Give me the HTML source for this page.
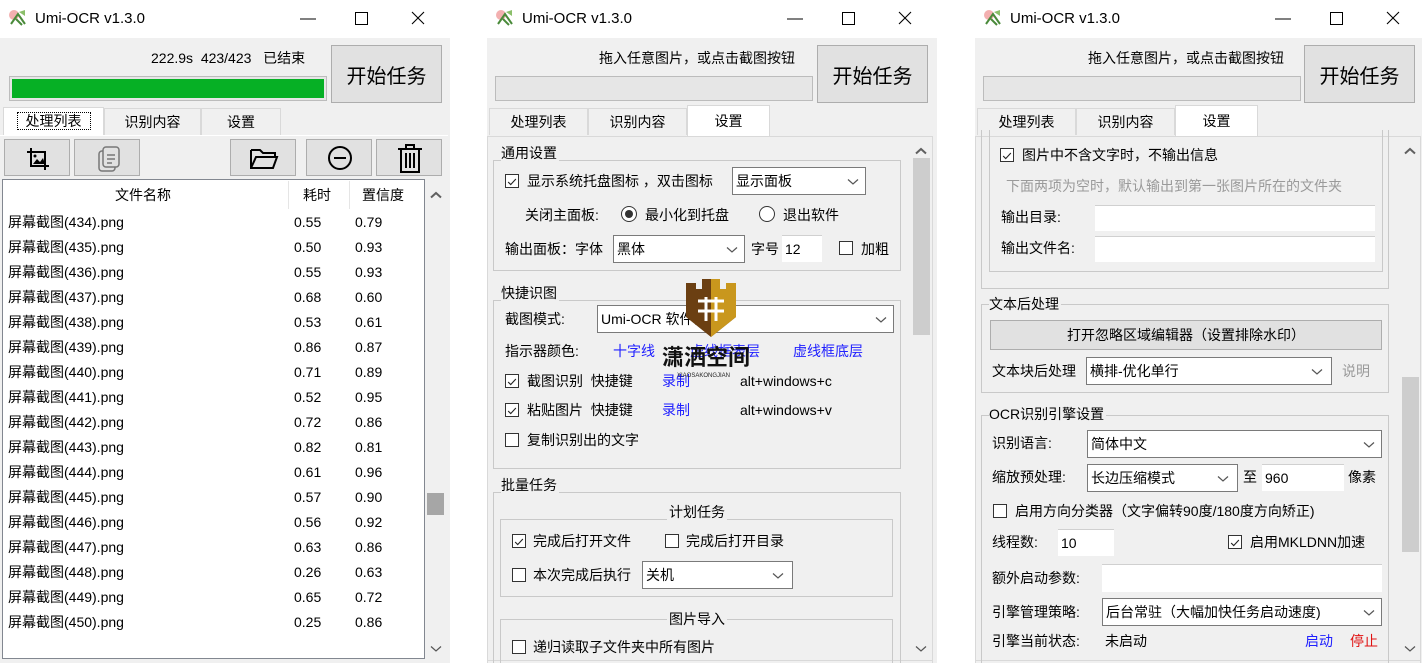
<!DOCTYPE html>
<html><head><meta charset="utf-8"><style>
*{margin:0;padding:0;box-sizing:border-box}
body{width:1422px;height:663px;overflow:hidden;background:#fff;font-family:"Liberation Sans","Noto Sans CJK SC",sans-serif;color:#000;position:relative}
.a{position:absolute}
.t{position:absolute;white-space:nowrap;font-size:14px;line-height:16px}
.win{position:absolute;top:0;height:663px;background:#f0f0f0;overflow:hidden}
.tb{position:absolute;left:0;top:0;right:0;height:38px;background:#fff}
.btn{position:absolute;background:#e1e1e1;border:1px solid #adadad}
.big{font-size:20px;display:flex;align-items:center;justify-content:center}
.pb{position:absolute;background:#e6e6e6;border:1px solid #bcbcbc}
.tab{position:absolute;top:108px;height:27px;border:1px solid #d9d9d9;border-bottom:none;background:#f0f0f0;font-size:14px;text-align:center;line-height:27px}
.sel{background:#fff;top:105px;height:31px;line-height:31px}
.g{position:absolute;border:1px solid #c9c9c9}
.gt{position:absolute;background:#f0f0f0;font-size:14px;line-height:16px;padding-right:2px;white-space:nowrap}
.in{position:absolute;background:#fff;border:1px solid #7a7a7a;font-size:14px;line-height:16px;padding:5px 3px;white-space:nowrap}
.in2{position:absolute;background:#fff;border-top:1px solid #d0d0d0;font-size:14px;padding:5px 3px;line-height:16px}
.cb{position:absolute;width:14px;height:14px;border:1px solid #333;background:#fff}
.rd{position:absolute;width:16px;height:16px;border:1px solid #333;border-radius:50%;background:#fff}
.sb{position:absolute;background:#f0f0f0}
.th{position:absolute;background:#cdcdcd}
</style></head><body>
<svg width="0" height="0" style="position:absolute"><defs>
<symbol id="chk" viewBox="0 0 14 14"><path d="M2.5 7 L5.5 10 L11.5 3.5" fill="none" stroke="#222" stroke-width="1.3"/></symbol>
<symbol id="dn" viewBox="0 0 12 8"><path d="M1 1.5 L6 6 L11 1.5" fill="none" stroke="#555" stroke-width="1.2"/></symbol>
<symbol id="up" viewBox="0 0 12 8"><path d="M1 6.5 L6 2 L11 6.5" fill="none" stroke="#606060" stroke-width="2"/></symbol>
<symbol id="ico" viewBox="0 0 20 18"><circle cx="6" cy="6" r="5" fill="#f3b0b0"/><path d="M3 15 L10 5 L17 15 M8 10 l6 6" stroke="#4a8a3a" stroke-width="2" fill="none"/><path d="M11 3 l6 -2 l0 6 z" fill="#8bbf6a"/></symbol>
<symbol id="ctl" viewBox="0 0 140 20"><path d="M0 10 H16" stroke="#000" stroke-width="1"/><rect x="55.5" y="3.5" width="12" height="12" fill="none" stroke="#000"/><path d="M112 3 L124 15 M124 3 L112 15" stroke="#000" stroke-width="1.1"/></symbol>
</defs></svg>

<!-- ============ LEFT WINDOW ============ -->
<div class="win" style="left:0;width:450px">
 <div class="tb"><svg class="a" style="left:8px;top:9px" width="20" height="18"><use href="#ico"/></svg>
  <div class="t" style="left:35px;top:10px;font-size:15px;line-height:18px">Umi-OCR v1.3.0</div>
  <svg class="a" style="left:300px;top:9px" width="140" height="20"><use href="#ctl"/></svg></div>
 <div class="t" style="left:151px;top:50px">222.9s&nbsp; 423/423&nbsp;&nbsp; 已结束</div>
 <div class="pb" style="left:9px;top:76px;width:318px;height:25px"><div class="a" style="left:2px;top:2px;right:2px;bottom:2px;background:#06b025"></div></div>
 <div class="btn big" style="left:331px;top:45px;width:111px;height:58px">开始任务</div>
 <div class="tab sel" style="left:3px;width:101px;top:107px;height:28px;line-height:26px"><span style="border:1px dotted #000;padding:0 8px">处理列表</span></div>
 <div class="tab" style="left:104px;width:97px">识别内容</div>
 <div class="tab" style="left:201px;width:80px">设置</div>
 <div class="a" style="left:0;top:135px;width:448px;height:1px;background:#fff"></div>
 <div class="btn" style="left:4px;top:139px;width:66px;height:37px"><svg class="a" style="left:20px;top:6px" width="26" height="26" viewBox="0 0 26 26"><path d="M6 2v18h18 M2 6h18v18" fill="none" stroke="#000" stroke-width="2"/><path d="M8 18l4-5 3 3 3-4 2 6z" fill="#000"/><circle cx="10" cy="10" r="1.5"/></svg></div>
 <div class="btn" style="left:74px;top:139px;width:66px;height:37px"><svg class="a" style="left:22px;top:5px" width="24" height="28" viewBox="0 0 24 28"><rect x="2" y="6" width="16" height="20" rx="3" fill="none" stroke="#777" stroke-width="1.5"/><rect x="6" y="2" width="16" height="20" rx="3" fill="#e1e1e1" stroke="#777" stroke-width="1.5"/><path d="M10 10h8M10 14h8M10 18h5" stroke="#777" stroke-width="1.5"/></svg></div>
 <div class="btn" style="left:230px;top:139px;width:66px;height:37px"><svg class="a" style="left:18px;top:8px" width="30" height="22" viewBox="0 0 30 22"><path d="M2 2h9l3 3h12v4 M2 2v18h22l4-11H7l-5 11" fill="none" stroke="#000" stroke-width="2"/></svg></div>
 <div class="btn" style="left:306px;top:139px;width:66px;height:37px"><svg class="a" style="left:20px;top:5px" width="26" height="26" viewBox="0 0 26 26"><circle cx="13" cy="13" r="11" fill="none" stroke="#000" stroke-width="2"/><path d="M7 13h12" stroke="#000" stroke-width="2"/></svg></div>
 <div class="btn" style="left:376px;top:139px;width:66px;height:37px"><svg class="a" style="left:20px;top:3px" width="26" height="31" viewBox="0 0 26 31"><path d="M1 6h24 M9 6V2h8v4 M4 6v23h18V6 M9 10v15M13 10v15M17 10v15" fill="none" stroke="#000" stroke-width="2"/></svg></div>
 <div class="a" style="left:2px;top:179px;width:423px;height:480px;background:#fff;border:1px solid #828790"></div>
 <div class="a" style="left:288px;top:181px;width:1px;height:28px;background:#e5e5e5"></div>
 <div class="a" style="left:349px;top:181px;width:1px;height:28px;background:#e5e5e5"></div>
 <div class="t" style="left:115px;top:187px">文件名称</div>
 <div class="t" style="left:303px;top:187px">耗时</div>
 <div class="t" style="left:362px;top:187px">置信度</div>
 <div class="sb" style="left:426px;top:179px;width:19px;height:480px"></div>
 <svg class="a" style="left:430px;top:191px" width="12" height="8"><use href="#up"/></svg>
 <svg class="a" style="left:430px;top:645px" width="12" height="8"><use href="#dn"/></svg>
 <div class="th" style="left:427px;top:493px;width:17px;height:22px;background:#a6a6a6"></div>
 <div id="rows"></div>
</div>

<!-- ============ MIDDLE WINDOW ============ -->
<div class="win" style="left:487px;width:450px">
 <div class="tb"><svg class="a" style="left:8px;top:9px" width="20" height="18"><use href="#ico"/></svg>
  <div class="t" style="left:35px;top:10px;font-size:15px;line-height:18px">Umi-OCR v1.3.0</div>
  <svg class="a" style="left:300px;top:9px" width="140" height="20"><use href="#ctl"/></svg></div>
 <div class="t" style="left:112px;top:50px">拖入任意图片，或点击截图按钮</div>
 <div class="pb" style="left:8px;top:76px;width:318px;height:25px"></div>
 <div class="btn big" style="left:330px;top:45px;width:111px;height:58px">开始任务</div>
 <div class="tab" style="left:2px;width:99px">处理列表</div>
 <div class="tab" style="left:101px;width:99px">识别内容</div>
 <div class="tab sel" style="left:200px;width:83px">设置</div>
 <div class="a" style="left:0;top:136px;width:446px;height:527px;border:1px solid #d9d9d9;border-bottom:none"></div>
 <div class="sb" style="left:424px;top:137px;width:19px;height:523px"></div>
 <svg class="a" style="left:428px;top:147px" width="12" height="8"><use href="#up"/></svg>
 <svg class="a" style="left:428px;top:645px" width="12" height="8"><use href="#dn"/></svg>
 <div class="th" style="left:426px;top:158px;width:17px;height:177px"></div>
 <div class="a" style="left:0;top:660px;width:446px;height:1px;background:#d9d9d9"></div>

 <div class="g" style="left:6px;top:160px;width:408px;height:111px"></div>
 <div class="gt" style="left:14px;top:145px">通用设置</div>
 <div class="cb" style="left:18px;top:174px"><svg width="12" height="12"><use href="#chk"/></svg></div>
 <div class="t" style="left:40px;top:173px">显示系统托盘图标 ，双击图标</div>
 <div class="in" style="left:245px;top:167px;width:134px;height:28px">显示面板<svg class="a" style="right:6px;top:10px" width="12" height="8"><use href="#dn"/></svg></div>
 <div class="t" style="left:38px;top:207px">关闭主面板:</div>
 <div class="rd" style="left:134px;top:206px"><div class="a" style="left:3px;top:3px;width:8px;height:8px;border-radius:50%;background:#333"></div></div>
 <div class="t" style="left:158px;top:207px">最小化到托盘</div>
 <div class="rd" style="left:272px;top:206px"></div>
 <div class="t" style="left:296px;top:207px">退出软件</div>
 <div class="t" style="left:18px;top:241px">输出面板：字体</div>
 <div class="in" style="left:126px;top:235px;width:132px;height:28px">黑体<svg class="a" style="right:6px;top:10px" width="12" height="8"><use href="#dn"/></svg></div>
 <div class="t" style="left:264px;top:241px">字号</div>
 <div class="in2" style="left:295px;top:235px;width:40px;height:27px">12</div>
 <div class="cb" style="left:352px;top:241px"></div>
 <div class="t" style="left:374px;top:241px">加粗</div>

 <div class="g" style="left:6px;top:300px;width:408px;height:169px"></div>
 <div class="gt" style="left:14px;top:285px">快捷识图</div>
 <div class="t" style="left:18px;top:311px">截图模式:</div>
 <div class="in" style="left:110px;top:305px;width:297px;height:28px">Umi-OCR 软件截图<svg class="a" style="right:6px;top:10px" width="12" height="8"><use href="#dn"/></svg></div>
 <div class="t" style="left:18px;top:343px">指示器颜色:</div>
 <div class="t" style="left:126px;top:343px;color:#2020ff">十字线</div>
 <div class="t" style="left:203px;top:343px;color:#2020ff">虚线框表层</div>
 <div class="t" style="left:306px;top:343px;color:#2020ff">虚线框底层</div>
 <div class="cb" style="left:18px;top:374px"><svg width="12" height="12"><use href="#chk"/></svg></div>
 <div class="t" style="left:40px;top:373px">截图识别&nbsp; 快捷键</div>
 <div class="t" style="left:175px;top:373px;color:#2020ff">录制</div>
 <div class="t" style="left:253px;top:373px">alt+windows+c</div>
 <div class="cb" style="left:18px;top:403px"><svg width="12" height="12"><use href="#chk"/></svg></div>
 <div class="t" style="left:40px;top:402px">粘贴图片&nbsp; 快捷键</div>
 <div class="t" style="left:175px;top:402px;color:#2020ff">录制</div>
 <div class="t" style="left:253px;top:402px">alt+windows+v</div>
 <div class="cb" style="left:18px;top:433px"></div>
 <div class="t" style="left:40px;top:432px">复制识别出的文字</div>

 <!-- watermark -->
 <svg class="a" style="left:199px;top:279px" width="50" height="58" viewBox="0 0 50 58"><path d="M0 4h10v6h6V0h18v10h6V4h10v34L25 58 0 38z" fill="#6b3f12"/><path d="M25 0h9v10h6V4h10v34L25 58z" fill="#c9971d"/><path d="M12 22h26M12 32h26M20 18v24M30 18v24" stroke="#fff" stroke-width="3"/></svg>
 <div class="t" style="left:175px;top:345px;font-size:22px;line-height:26px;font-weight:bold;color:#111">潇洒空间</div>
 <div class="t" style="left:190px;top:372px;font-size:6px;line-height:8px;color:#222">XIAOSAKONGJIAN</div>

 <div class="g" style="left:6px;top:492px;width:408px;height:180px"></div>
 <div class="gt" style="left:14px;top:477px">批量任务</div>
 <div class="g" style="left:13px;top:519px;width:393px;height:78px"></div>
 <div class="gt" style="left:180px;top:504px;padding:0 2px">计划任务</div>
 <div class="cb" style="left:25px;top:534px"><svg width="12" height="12"><use href="#chk"/></svg></div>
 <div class="t" style="left:46px;top:533px">完成后打开文件</div>
 <div class="cb" style="left:178px;top:534px"></div>
 <div class="t" style="left:199px;top:533px">完成后打开目录</div>
 <div class="cb" style="left:25px;top:568px"></div>
 <div class="t" style="left:46px;top:567px">本次完成后执行</div>
 <div class="in" style="left:155px;top:561px;width:151px;height:28px">关机<svg class="a" style="right:8px;top:10px" width="12" height="8"><use href="#dn"/></svg></div>
 <div class="g" style="left:13px;top:619px;width:393px;height:60px"></div>
 <div class="gt" style="left:180px;top:611px;padding:0 2px">图片导入</div>
 <div class="cb" style="left:25px;top:640px"></div>
 <div class="t" style="left:46px;top:639px">递归读取子文件夹中所有图片</div>
</div>

<!-- ============ RIGHT WINDOW ============ -->
<div class="win" style="left:975px;width:447px">
 <div class="tb"><svg class="a" style="left:8px;top:9px" width="20" height="18"><use href="#ico"/></svg>
  <div class="t" style="left:35px;top:10px;font-size:15px;line-height:18px">Umi-OCR v1.3.0</div>
  <svg class="a" style="left:300px;top:9px" width="140" height="20"><use href="#ctl"/></svg></div>
 <div class="t" style="left:113px;top:50px">拖入任意图片，或点击截图按钮</div>
 <div class="pb" style="left:8px;top:76px;width:318px;height:25px"></div>
 <div class="btn big" style="left:329px;top:45px;width:111px;height:58px">开始任务</div>
 <div class="tab" style="left:2px;width:99px">处理列表</div>
 <div class="tab" style="left:101px;width:99px">识别内容</div>
 <div class="tab sel" style="left:200px;width:83px">设置</div>
 <div class="a" style="left:0;top:136px;width:446px;height:527px;border:1px solid #d9d9d9;border-bottom:none"></div>
 <div class="sb" style="left:425px;top:137px;width:19px;height:523px"></div>
 <svg class="a" style="left:429px;top:147px" width="12" height="8"><use href="#up"/></svg>
 <svg class="a" style="left:429px;top:645px" width="12" height="8"><use href="#dn"/></svg>
 <div class="th" style="left:427px;top:377px;width:17px;height:175px"></div>
 <div class="a" style="left:0;top:660px;width:446px;height:1px;background:#d9d9d9"></div>

 <div class="a" style="left:6px;top:130px;width:408px;height:159px;border:1px solid #c9c9c9;border-top:none"></div>
 <div class="a" style="left:14px;top:130px;width:394px;height:142px;border:1px solid #c9c9c9;border-top:none"></div>
 <div class="cb" style="left:25px;top:148px"><svg width="12" height="12"><use href="#chk"/></svg></div>
 <div class="t" style="left:47px;top:147px">图片中不含文字时，不输出信息</div>
 <div class="t" style="left:31px;top:178px;color:#9a9a9a">下面两项为空时，默认输出到第一张图片所在的文件夹</div>
 <div class="t" style="left:26px;top:209px">输出目录:</div>
 <div class="in2" style="left:120px;top:205px;width:280px;height:26px"></div>
 <div class="t" style="left:26px;top:240px">输出文件名:</div>
 <div class="in2" style="left:120px;top:236px;width:280px;height:26px"></div>

 <div class="g" style="left:6px;top:304px;width:408px;height:89px"></div>
 <div class="gt" style="left:14px;top:296px">文本后处理</div>
 <div class="btn" style="left:15px;top:320px;width:392px;height:30px;font-size:14px;text-align:center;line-height:28px">打开忽略区域编辑器（设置排除水印）</div>
 <div class="t" style="left:17px;top:363px">文本块后处理</div>
 <div class="in" style="left:111px;top:357px;width:246px;height:28px">横排-优化单行<svg class="a" style="right:8px;top:10px" width="12" height="8"><use href="#dn"/></svg></div>
 <div class="t" style="left:367px;top:363px;color:#9a9a9a">说明</div>

 <div class="g" style="left:6px;top:415px;width:408px;height:260px"></div>
 <div class="gt" style="left:14px;top:406px">OCR识别引擎设置</div>
 <div class="t" style="left:17px;top:435px">识别语言:</div>
 <div class="in" style="left:112px;top:430px;width:295px;height:28px">简体中文<svg class="a" style="right:6px;top:10px" width="12" height="8"><use href="#dn"/></svg></div>
 <div class="t" style="left:17px;top:469px">缩放预处理:</div>
 <div class="in" style="left:112px;top:464px;width:151px;height:28px">长边压缩模式<svg class="a" style="right:8px;top:10px" width="12" height="8"><use href="#dn"/></svg></div>
 <div class="t" style="left:268px;top:469px">至</div>
 <div class="in2" style="left:287px;top:464px;width:82px;height:27px">960</div>
 <div class="t" style="left:373px;top:469px">像素</div>
 <div class="cb" style="left:18px;top:504px"></div>
 <div class="t" style="left:40px;top:503px">启用方向分类器（文字偏转90度/180度方向矫正)</div>
 <div class="t" style="left:17px;top:534px">线程数:</div>
 <div class="in2" style="left:83px;top:529px;width:56px;height:27px">10</div>
 <div class="cb" style="left:253px;top:535px"><svg width="12" height="12"><use href="#chk"/></svg></div>
 <div class="t" style="left:275px;top:534px">启用MKLDNN加速</div>
 <div class="t" style="left:17px;top:570px">额外启动参数:</div>
 <div class="in2" style="left:127px;top:564px;width:280px;height:28px"></div>
 <div class="t" style="left:17px;top:604px">引擎管理策略:</div>
 <div class="in" style="left:127px;top:598px;width:280px;height:28px">后台常驻（大幅加快任务启动速度)<svg class="a" style="right:6px;top:10px" width="12" height="8"><use href="#dn"/></svg></div>
 <div class="t" style="left:17px;top:633px">引擎当前状态:</div>
 <div class="t" style="left:130px;top:633px">未启动</div>
 <div class="t" style="left:330px;top:633px;color:#2020ff">启动</div>
 <div class="t" style="left:375px;top:633px;color:#e01010">停止</div>
</div>

<script>
var d=[["434","0.55","0.79"],["435","0.50","0.93"],["436","0.55","0.93"],["437","0.68","0.60"],["438","0.53","0.61"],["439","0.86","0.87"],["440","0.71","0.89"],["441","0.52","0.95"],["442","0.72","0.86"],["443","0.82","0.81"],["444","0.61","0.96"],["445","0.57","0.90"],["446","0.56","0.92"],["447","0.63","0.86"],["448","0.26","0.63"],["449","0.65","0.72"],["450","0.25","0.86"]];
var h="";d.forEach(function(r,i){var y=214+i*25;h+='<div class="t" style="left:8px;top:'+y+'px">屏幕截图('+r[0]+').png</div><div class="t" style="left:294px;top:'+y+'px">'+r[1]+'</div><div class="t" style="left:355px;top:'+y+'px">'+r[2]+'</div>';});
document.getElementById("rows").innerHTML=h;
</script>
</body></html>
